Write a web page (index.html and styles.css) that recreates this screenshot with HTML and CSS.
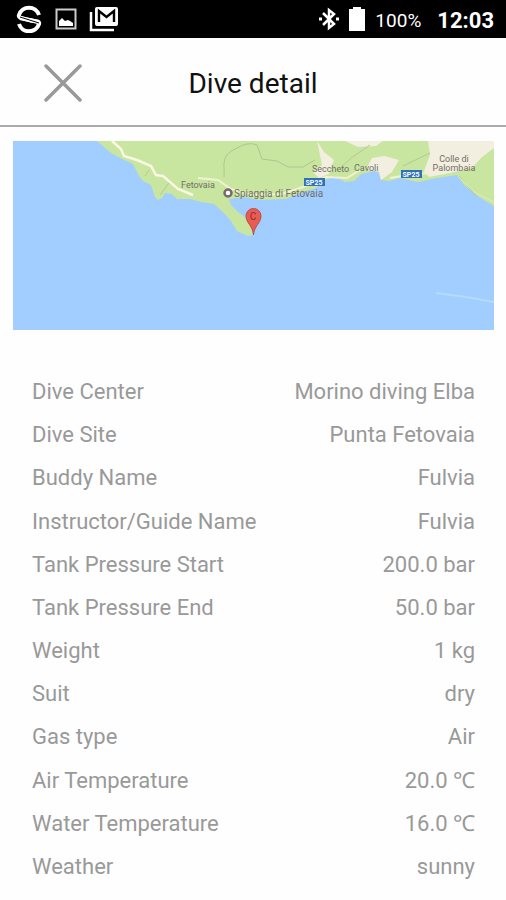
FILE: index.html
```html
<!DOCTYPE html>
<html lang="en">
<head>
<meta charset="utf-8">
<meta name="viewport" content="width=device-width, initial-scale=1">
<title>Dive detail</title>
<link rel="stylesheet" href="styles.css">
</head>
<body>
<div class="status-bar">
  <div class="status-group">
    <svg width="28" height="28" viewBox="0 0 28 28" fill="none" stroke="#fff">
      <path d="M24 10A10.500 10.500 0 0 0 4 10C3 13 6 13 14 15C22 17 25 16 24 19A10.500 10.500 0 0 1 4 19" stroke-width="4"/>
      <path d="M5 13L24 17" stroke-width="4"/>
      <path d="M5 12L24 18" stroke="#000" stroke-width="1"/>
    </svg>
    <svg width="22" height="22" viewBox="0 0 22 22">
      <rect x="1.5" y="1.5" width="19" height="19" fill="none" stroke="#ccc" stroke-width="2"/>
      <path d="M4 18V13L7 10L10 13L13 12L15 13L18 15V18Z" fill="#fff"/>
    </svg>
    <svg width="30" height="26" viewBox="0 0 30 26">
      <path d="M2 6V24H25" fill="none" stroke="#fff" stroke-width="2.5"/>
      <rect x="6" y="1" width="23" height="19" rx="2" fill="#fff"/>
      <path d="M10 16V5L17.500 11L25 5V16" fill="none" stroke="#000" stroke-width="2.400"/>
    </svg>
  </div>
  <div class="status-group status-right">
    <svg width="20" height="24" viewBox="0 0 20 24" fill="none" stroke="#fff" stroke-width="2.500">
      <path d="M4 6L15 17L10 21V3L15 7L4 18"/>
      <path d="M0 12H3M17 12H20" stroke-width="3"/>
    </svg>
    <svg width="16" height="24" viewBox="0 0 16 24">
      <path d="M4 0H12V2H16V24H0V2H4Z" fill="#fff"/>
    </svg>
    <span class="battery-level">100%</span>
    <time class="clock">12:03</time>
  </div>
</div>

<header class="title-bar">
  <button class="close" type="button" aria-label="Close">
    <svg width="38" height="38" viewBox="0 0 38 38" fill="none" stroke="#999" stroke-width="3.500" stroke-linecap="round">
      <path d="M2 2L36 36M36 2L2 36"/>
    </svg>
  </button>
  <h1 class="title">Dive detail</h1>
</header>

<main class="content">
  <svg class="map" viewBox="13 141 481 189" role="img" aria-label="Map of the dive site">
    <rect x="13" y="141" width="481" height="189" fill="#a2cdff"/>
    <path d="M97 141L111 153L122 159L133 164L139 176L143 181L151 185L155 197L158 200L162 198L165 193L172 194L177 199L190 199L201 202L214 204L224 213L231 221L237 231L248 236L253 235L249 220L238 212L231 205L229 199L245 197L258 200L286 199L300 193L316 188L325 180L335 176L345 182L354 181L361 174L378 170L381 180L389 181L400 178L418 182L437 178L457 175L464 185L479 197L494 206V141Z" fill="#c9e6a0"/>
    <path d="M345 141H383L376 146L358 147ZM428 141H494V148L482 157L472 168L450 173L429 177L424 171L430 155ZM372 158L384 156L399 160L392 172L381 180L379 172L366 169ZM317 141L324 152L334 160L329 174L319 178L313 172L322 165Z" fill="#f2eee0"/>
    <path d="M224 177C225 167 220 156 235 149Q248 141 257 145L262 159L277 161L288 167L303 167L315 160" fill="none" stroke="#b0c590" stroke-width="1"/>
    <path d="M342 166L354 156L370 145M403 166L430 153M459 176L477 197M145 176L149 170M160 195L169 183" fill="none" stroke="#b5c994" stroke-width="1"/>
    <path d="M112 141L121 149L124 156L137 160L151 166L156 175L163 176L178 189L193 195" fill="none" stroke="#faf8e4" stroke-width="2.500"/>
    <path d="M198 178L218 180L231 189L252 195L282 194L303 187L326 177L347 178L360 170M390 178L414 174L431 173" fill="none" stroke="#f1f2d3" stroke-width="2"/>
    <path d="M458 176L474 192L494 202" fill="none" stroke="#dbebb4" stroke-width="1"/>
    <path d="M436 293L466 297L494 302" fill="none" stroke="#b5dafa" stroke-width="2"/>
    <g class="map-labels">
      <text x="181" y="188">Fetovaia</text>
      <text class="place" x="234" y="197">Spiaggia di Fetovaia</text>
      <text x="312" y="172">Seccheto</text>
      <text x="354" y="171">Cavoli</text>
      <text x="454" y="162" text-anchor="middle">Colle di</text>
      <text x="454" y="171" text-anchor="middle">Palombaia</text>
    </g>
    <circle cx="228" cy="193" r="3.500" fill="#fff" stroke="#77696c" stroke-width="2.500"/>
    <rect x="304" y="178" width="21" height="8" fill="#2f72b9"/>
    <rect x="401" y="170" width="21" height="8" fill="#2f72b9"/>
    <g class="road-labels">
      <text x="314" y="185">SP25</text>
      <text x="411" y="177">SP25</text>
    </g>
    <path d="M253.500 235C253 226 246 223 246 216A7.500 7.500 0 0 1 261 216C261 223 254 226 253.500 235Z" fill="#ea5b54" stroke="#bd4c49" stroke-width="1"/>
    <text class="pin-label" x="253" y="220">C</text>
  </svg>

  <dl class="details">
    <div class="row"><dt>Dive Center</dt><dd>Morino diving Elba</dd></div>
    <div class="row"><dt>Dive Site</dt><dd>Punta Fetovaia</dd></div>
    <div class="row"><dt>Buddy Name</dt><dd>Fulvia</dd></div>
    <div class="row"><dt>Instructor/Guide Name</dt><dd>Fulvia</dd></div>
    <div class="row"><dt>Tank Pressure Start</dt><dd>200.0 bar</dd></div>
    <div class="row"><dt>Tank Pressure End</dt><dd>50.0 bar</dd></div>
    <div class="row"><dt>Weight</dt><dd>1 kg</dd></div>
    <div class="row"><dt>Suit</dt><dd>dry</dd></div>
    <div class="row"><dt>Gas type</dt><dd>Air</dd></div>
    <div class="row"><dt>Air Temperature</dt><dd>20.0 ℃</dd></div>
    <div class="row"><dt>Water Temperature</dt><dd>16.0 ℃</dd></div>
    <div class="row"><dt>Weather</dt><dd>sunny</dd></div>
  </dl>
</main>
</body>
</html>
```
FILE: styles.css
```css
* {
  box-sizing: border-box;
}

body {
  display: flex;
  flex-direction: column;
  min-height: 100vh;
  margin: 0;
  background: #fefefe;
  color: #999;
  font-family: Roboto, "Noto Sans", sans-serif;
}

.status-bar {
  display: flex;
  justify-content: space-between;
  align-items: center;
  height: 38px;
  padding: 0 12px 0 15px;
  background: #000;
  color: #fff;
}

.status-group {
  display: flex;
  align-items: center;
  gap: 12px;
}

.status-right {
  gap: 10px;
}

.battery-level {
  padding-top: 2px;
  font-size: 19px;
}

.clock {
  margin-left: 6px;
  padding-top: 2px;
  font-size: 22px;
  font-weight: 700;
}

.title-bar {
  display: grid;
  grid-template-columns: 1fr auto 1fr;
  align-items: center;
  height: 89px;
  padding: 2px 44px 0;
  border-bottom: 2px solid #aaa;
}

.close {
  justify-self: start;
  padding: 0;
  border: 0;
  background: none;
  cursor: pointer;
}

.close svg {
  display: block;
}

.title {
  margin: 0;
  padding-top: 2px;
  color: #111;
  font-size: 28px;
  font-weight: 400;
}

.content {
  display: flex;
  flex: 1;
  flex-direction: column;
}

.map {
  display: block;
  width: calc(100% - 25px);
  margin: 14px 12px 0 13px;
}

.map-labels {
  fill: #736e67;
  font-size: 9px;
}

.map-labels .place {
  font-size: 10px;
}

.road-labels {
  fill: #fff;
  font-size: 7px;
  font-weight: 700;
  text-anchor: middle;
}

.pin-label {
  fill: #852e2c;
  font-size: 10px;
  text-anchor: middle;
}

.details {
  display: flex;
  flex: 1;
  flex-direction: column;
  justify-content: space-between;
  margin: 44px 31px 15px 32px;
  font-size: 22px;
  line-height: 36px;
}

.row {
  display: flex;
  justify-content: space-between;
}

.row dd {
  margin: 0;
}
```
